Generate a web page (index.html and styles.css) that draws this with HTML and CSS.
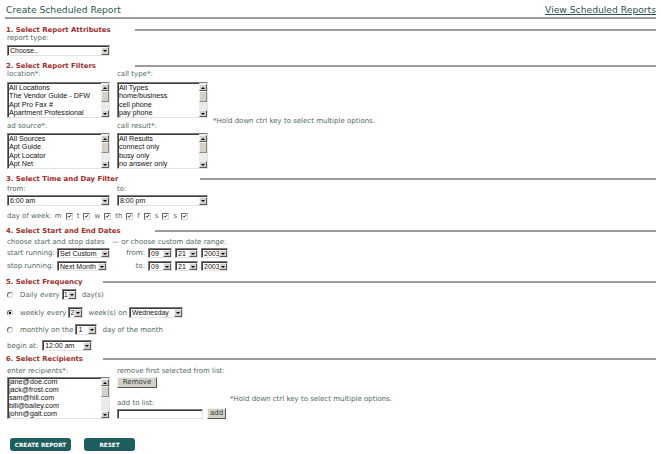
FILE: index.html
```html
<!DOCTYPE html>
<html>
<head>
	<meta charset="utf-8">
	<meta name="viewport" content="width=device-width, initial-scale=1.0">
	<title>Create Scheduled Report</title>
	<link rel="stylesheet" href="styles.css">
</head>
<body>
<div class="page">
	<div class="top">
		<span class="page-title">Create Scheduled Report</span>
		<a class="top-link" href="#">View Scheduled Reports</a>
	</div>
	<div class="rule"></div>

	<!-- 1. attributes -->
	<div class="section-head first"><span class="section-title s1">1. Select Report Attributes</span><span class="section-line"></span></div>
	<div class="block">
		<div class="label">report type:</div>
		<span class="dd w-103 mt2"><span class="dd-val">Choose..</span><span class="dd-btn"></span></span>
	</div>

	<!-- 2. filters -->
	<div class="section-head"><span class="section-title s2">2. Select Report Filters</span><span class="section-line"></span></div>
	<div class="cols">
		<div class="col-a">
			<div class="label">location*:</div>
			<div class="listbox h4 mt3">
				<div class="list-items">
					<div>All Locations</div>
					<div>The Vendor Guide - DFW</div>
					<div>Apt Pro Fax #</div>
					<div>Apartment Professional</div>
				</div>
				<div class="scroll"><span class="sb-btn up"></span><span class="sb-thumb"></span><span class="sb-track"></span><span class="sb-btn down"></span></div>
			</div>
			<div class="label mt4">ad source*:</div>
			<div class="listbox h4 mt2">
				<div class="list-items">
					<div>All Sources</div>
					<div>Apt Guide</div>
					<div>Apt Locator</div>
					<div>Apt Net</div>
				</div>
				<div class="scroll"><span class="sb-btn up"></span><span class="sb-thumb"></span><span class="sb-track"></span><span class="sb-btn down"></span></div>
			</div>
		</div>
		<div class="col-b">
			<div class="label">call type*:</div>
			<div class="listbox h4 mt3">
				<div class="list-items">
					<div>All Types</div>
					<div>home/business</div>
					<div>cell phone</div>
					<div>pay phone</div>
				</div>
				<div class="scroll"><span class="sb-btn up"></span><span class="sb-thumb"></span><span class="sb-track"></span><span class="sb-btn down"></span></div>
			</div>
			<div class="label mt4">call result*:</div>
			<div class="listbox h4 mt2">
				<div class="list-items">
					<div>All Results</div>
					<div>connect only</div>
					<div>busy only</div>
					<div>no answer only</div>
				</div>
				<div class="scroll"><span class="sb-btn up"></span><span class="sb-thumb"></span><span class="sb-track"></span><span class="sb-btn down"></span></div>
			</div>
		</div>
		<div class="hint hint-filters">*Hold down ctrl key to select multiple options.</div>
	</div>

	<!-- 3. time and day -->
	<div class="section-head"><span class="section-title s3">3. Select Time and Day Filter</span><span class="section-line"></span></div>
	<div class="cols mt2">
		<div class="col-a">
			<div class="label">from:</div>
			<span class="dd w-103 mt1"><span class="dd-val">6:00 am</span><span class="dd-btn"></span></span>
		</div>
		<div class="col-b">
			<div class="label">to:</div>
			<span class="dd w-91 mt1"><span class="dd-val">8:00 pm</span><span class="dd-btn"></span></span>
		</div>
	</div>
	<div class="days">
		<span>day of week:</span>
		<span class="day">m</span><span class="check"><svg viewBox="0 0 7 7"><path d="M1.4 3.2 L2.8 4.7 L5.6 1.6" fill="none" stroke="#000" stroke-width="1.3"/></svg></span>
		<span class="day">t</span><span class="check"><svg viewBox="0 0 7 7"><path d="M1.4 3.2 L2.8 4.7 L5.6 1.6" fill="none" stroke="#000" stroke-width="1.3"/></svg></span>
		<span class="day">w</span><span class="check"><svg viewBox="0 0 7 7"><path d="M1.4 3.2 L2.8 4.7 L5.6 1.6" fill="none" stroke="#000" stroke-width="1.3"/></svg></span>
		<span class="day">th</span><span class="check"><svg viewBox="0 0 7 7"><path d="M1.4 3.2 L2.8 4.7 L5.6 1.6" fill="none" stroke="#000" stroke-width="1.3"/></svg></span>
		<span class="day">f</span><span class="check"><svg viewBox="0 0 7 7"><path d="M1.4 3.2 L2.8 4.7 L5.6 1.6" fill="none" stroke="#000" stroke-width="1.3"/></svg></span>
		<span class="day">s</span><span class="check"><svg viewBox="0 0 7 7"><path d="M1.4 3.2 L2.8 4.7 L5.6 1.6" fill="none" stroke="#000" stroke-width="1.3"/></svg></span>
		<span class="day">s</span><span class="check"><svg viewBox="0 0 7 7"><path d="M1.4 3.2 L2.8 4.7 L5.6 1.6" fill="none" stroke="#000" stroke-width="1.3"/></svg></span>
	</div>

	<!-- 4. dates -->
	<div class="section-head"><span class="section-title s4">4. Select Start and End Dates</span><span class="section-line"></span></div>
	<div class="dates">
		<div class="dates-note">choose start and stop dates</div>
		<div class="dates-note-2">&mdash; or choose custom date range:</div>

		<div class="date-label">start running:</div>
		<div><span class="dd w-53"><span class="dd-val">Set Custom</span><span class="dd-btn"></span></span></div>
		<div class="range-label">from:</div>
		<div class="date-picks">
			<span class="dd w-24"><span class="dd-val">09</span><span class="dd-btn"></span></span>
			<span class="dd w-23"><span class="dd-val">21</span><span class="dd-btn"></span></span>
			<span class="dd w-27"><span class="dd-val">2003</span><span class="dd-btn"></span></span>
		</div>

		<div class="date-label row2">stop running:</div>
		<div class="row2"><span class="dd w-50"><span class="dd-val">Next Month</span><span class="dd-btn"></span></span></div>
		<div class="range-label row2">to:</div>
		<div class="date-picks row2">
			<span class="dd w-24"><span class="dd-val">09</span><span class="dd-btn"></span></span>
			<span class="dd w-23"><span class="dd-val">21</span><span class="dd-btn"></span></span>
			<span class="dd w-27"><span class="dd-val">2003</span><span class="dd-btn"></span></span>
		</div>
	</div>

	<!-- 5. frequency -->
	<div class="section-head"><span class="section-title s5">5. Select Frequency</span><span class="section-line"></span></div>
	<div class="freq-row mt3">
		<span class="radio"></span>
		<span>Daily every</span>
		<span class="dd w-15 inline"><span class="dd-val">1</span><span class="dd-btn"></span></span>
		<span>day(s)</span>
	</div>
	<div class="freq-row mt7">
		<span class="radio on"></span>
		<span>weekly every</span>
		<span class="dd w-15 inline"><span class="dd-val">2</span><span class="dd-btn"></span></span>
		<span>week(s) on</span>
		<span class="dd w-54 inline"><span class="dd-val">Wednesday</span><span class="dd-btn"></span></span>
	</div>
	<div class="freq-row mt6">
		<span class="radio"></span>
		<span>monthly on the</span>
		<span class="dd w-22 inline"><span class="dd-val">1</span><span class="dd-btn"></span></span>
		<span>day of the month</span>
	</div>
	<div class="freq-row begin mt5">
		<span>begin at:</span>
		<span class="dd w-50 inline"><span class="dd-val">12:00 am</span><span class="dd-btn"></span></span>
	</div>

	<!-- 6. recipients -->
	<div class="section-head tight"><span class="section-title s6">6. Select Recipients</span><span class="section-line"></span></div>
	<div class="cols mt4">
		<div class="col-a">
			<div class="label">enter recipients*:</div>
			<div class="listbox h5 mt1">
				<div class="list-items">
					<div>jane@doe.com</div>
					<div>jack@frost.com</div>
					<div>sam@hill.com</div>
					<div>bill@bailey.com</div>
					<div>john@galt.com</div>
				</div>
				<div class="scroll"><span class="sb-btn up"></span><span class="sb-thumb"></span><span class="sb-track"></span><span class="sb-btn down"></span></div>
			</div>
		</div>
		<div class="col-mid">
			<div class="label">remove first selected from list:</div>
			<button class="win-btn remove" type="button">Remove</button>
			<div class="label add-label">add to list:</div>
			<div class="add-row">
				<input class="text-in" type="text">
				<button class="win-btn add" type="button">add</button>
			</div>
		</div>
		<div class="hint hint-recip">*Hold down ctrl key to select multiple options.</div>
	</div>

	<div class="actions">
		<button class="btn create" type="button">CREATE REPORT</button>
		<button class="btn reset" type="button">RESET</button>
	</div>
</div>
</body>
</html>
```

FILE: styles.css
```css
body {
	margin: 0;
	background: #fff;
	font-family: "DejaVu Sans", Verdana, sans-serif;
	font-size: 7px;
	color: #50695a;
}
.page {
	padding: 2px 5px 0 5px;
}
.top {
	display: flex;
	justify-content: space-between;
	align-items: center;
	height: 14px;
}
.page-title {
	font-size: 9.2px;
	color: #2d5353;
	padding-left: 1px;
}
.top-link {
	font-size: 9.2px;
	color: #2d5353;
	text-decoration: underline;
}
.rule {
	height: 2px;
	margin-top: 1px;
	background: #9a9a9a;
}

/* section headers */
.section-head {
	display: flex;
	align-items: center;
	height: 9px;
	margin-top: 5px;
	padding-left: 1px;
}
.section-head.first { margin-top: 6px; }
.section-head.tight { margin-top: 3px; }
.section-title {
	flex: none;
	font-weight: bold;
	font-size: 6.9px;
	color: #a02c2c;
	white-space: nowrap;
}
.s1, .s2 { width: 129px; }
.s3 { width: 194px; }
.s4 { width: 149px; }
.s5, .s6 { width: 97px; }
.section-line {
	flex: 1;
	height: 2px;
	background: #9a9a9a;
}

.block, .cols, .days, .dates, .freq-row, .actions {
	padding-left: 2px;
}
.label {
	height: 9px;
	line-height: 9px;
	white-space: nowrap;
}
.mt1 { margin-top: 1px; }
.mt2 { margin-top: 2px; }
.mt3 { margin-top: 3px; }
.mt4 { margin-top: 4px; }
.mt5 { margin-top: 5px; }
.mt6 { margin-top: 6px; }
.mt7 { margin-top: 7px; }

/* windows style dropdown */
.dd {
	display: inline-flex;
	box-sizing: border-box;
	height: 11px;
	border: 1px solid;
	border-color: #7c7c7c #e2e2e2 #e2e2e2 #7c7c7c;
	box-shadow: inset 1px 1px 0 #3c3c3c;
	background: #fff;
	font-family: "Liberation Sans", Arial, sans-serif;
	font-size: 7px;
	color: #111;
	vertical-align: middle;
}
.block .dd, .cols .dd { display: flex; }
.dd-val {
	flex: 1;
	min-width: 0;
	padding: 0 0 0 2px;
	line-height: 9px;
	white-space: nowrap;
	overflow: hidden;
}
.w-15 .dd-val { padding-left: 1px; }
.dd-btn {
	flex: none;
	display: flex;
	align-items: center;
	justify-content: center;
	box-sizing: border-box;
	width: 8px;
	margin: 1px 0 0 0;
	background: #d4d0c8;
	border: 1px solid;
	border-color: #f2f2f2 #5a5a5a #5a5a5a #f2f2f2;
}
.dd-btn::after {
	content: "";
	border-left: 2px solid transparent;
	border-right: 2px solid transparent;
	border-top: 2px solid #000;
}
.w-103 { width: 103px; }
.w-91 { width: 91px; }
.w-54 { width: 54px; }
.w-53 { width: 53px; }
.w-50 { width: 50px; }
.w-27 { width: 27px; }
.w-24 { width: 24px; }
.w-23 { width: 23px; }
.w-22 { width: 22px; }
.w-15 { width: 15px; }

/* listboxes */
.cols {
	display: flex;
}
.col-a {
	width: 103px;
	margin-right: 7px;
}
.col-b {
	width: 91px;
	margin-right: 5px;
}
.listbox {
	display: flex;
	box-sizing: border-box;
	border: 1px solid;
	border-color: #7c7c7c #e2e2e2 #e2e2e2 #7c7c7c;
	box-shadow: inset 1px 1px 0 #3c3c3c;
	background: #fff;
	font-family: "Liberation Sans", Arial, sans-serif;
	font-size: 7.2px;
	color: #111;
}
.listbox.h4 { height: 36px; }
.listbox.h5 { height: 42px; }
.list-items {
	flex: 1;
	min-width: 0;
	padding: 1px 0 0 1px;
	line-height: 8.3px;
	white-space: nowrap;
	overflow: hidden;
}
.h5 .list-items {
	padding-top: 0;
	line-height: 8px;
}
.scroll {
	flex: none;
	display: flex;
	flex-direction: column;
	width: 8px;
	padding: 1px 0 0 0;
	background: #ebebeb;
}
.sb-btn {
	flex: none;
	display: flex;
	align-items: center;
	justify-content: center;
	box-sizing: border-box;
	height: 7px;
	background: #d4d0c8;
	border: 1px solid;
	border-color: #f2f2f2 #5a5a5a #5a5a5a #f2f2f2;
}
.sb-btn.up::after {
	content: "";
	border-left: 2px solid transparent;
	border-right: 2px solid transparent;
	border-bottom: 2px solid #000;
}
.sb-btn.down::after {
	content: "";
	border-left: 2px solid transparent;
	border-right: 2px solid transparent;
	border-top: 2px solid #000;
}
.sb-thumb {
	flex: none;
	box-sizing: border-box;
	height: 11px;
	background: #d4d0c8;
	border: 1px solid;
	border-color: #f2f2f2 #8a8a8a #8a8a8a #f2f2f2;
}
.sb-track {
	flex: 1;
}
.hint {
	display: flex;
	align-items: center;
	white-space: nowrap;
}
.hint-filters {
	padding-top: 3px;
}

/* day of week */
.days {
	display: flex;
	align-items: center;
	height: 10px;
	margin-top: 5px;
}
.day {
	margin-left: 4px;
}
.days .day:nth-child(2) { margin-left: 3px; }
.check {
	display: inline-flex;
	box-sizing: border-box;
	width: 7px;
	height: 7px;
	margin-left: 4px;
	background: #fff;
	border: 1px solid;
	border-color: #6a6a6a #d8d8d8 #d8d8d8 #6a6a6a;
}
.check svg {
	width: 5px;
	height: 5px;
}

/* dates */
.dates {
	display: grid;
	grid-template-columns: 50px 55px 36px auto;
	grid-template-rows: 9px 11px 14px;
	margin-top: 3px;
}
.dates-note {
	grid-column: 1 / 3;
	white-space: nowrap;
	line-height: 9px;
}
.dates-note-2 {
	grid-column: 3 / 5;
	white-space: nowrap;
	line-height: 9px;
}
.dates .dd { height: 10px; }
.date-label {
	white-space: nowrap;
	line-height: 10px;
}
.range-label {
	text-align: right;
	padding-right: 3px;
	line-height: 10px;
}
.date-picks {
	display: flex;
	gap: 3px;
}
.dates > :nth-child(n+3) { margin-top: 1px; }
.dates > .row2 { margin-top: 3px; }

/* frequency */
.freq-row {
	display: flex;
	align-items: center;
	height: 11px;
	white-space: nowrap;
}
.radio {
	flex: none;
	box-sizing: border-box;
	width: 6px;
	height: 6px;
	margin-right: 7px;
	border-radius: 50%;
	background: #fff;
	border: 1px solid;
	border-color: #6a6a6a #d8d8d8 #d8d8d8 #6a6a6a;
}
.radio.on {
	background: radial-gradient(circle, #000 0 1.2px, #fff 1.6px);
}
.freq-row .dd.inline {
	margin: 0 5px 0 2px;
}
.freq-row.begin .dd.inline {
	margin-left: 4px;
}

/* recipients */
.col-mid {
	width: 113px;
}
.win-btn {
	box-sizing: border-box;
	height: 11px;
	padding: 0;
	background: #d4d0c8;
	border: 1px solid;
	border-color: #f4f4f4 #555 #555 #f4f4f4;
	font-family: "DejaVu Sans", Verdana, sans-serif;
	font-size: 7px;
	color: #2f3f36;
	line-height: 9px;
}
.remove {
	display: block;
	width: 40px;
	margin-top: 1px;
}
.add-label {
	margin-top: 11px;
}
.add-row {
	display: flex;
	align-items: flex-start;
}
.text-in {
	box-sizing: border-box;
	width: 86px;
	height: 10px;
	margin: 1px 0 0 0;
	padding: 0;
	background: #fff;
	border: 1px solid;
	border-color: #7c7c7c #e2e2e2 #e2e2e2 #7c7c7c;
	box-shadow: inset 1px 1px 0 #3c3c3c;
}
.add {
	width: 19px;
	margin-left: 4px;
}
.hint-recip {
	padding-top: 11px;
}

/* bottom buttons */
.actions {
	display: flex;
	gap: 13px;
	margin-top: 19px;
	padding-left: 5px;
}
.btn {
	height: 13px;
	padding: 0;
	border: none;
	border-radius: 3px;
	background: #1e5e5e;
	color: #fff;
	font-family: "DejaVu Sans", Verdana, sans-serif;
	font-weight: bold;
	font-size: 5.7px;
	cursor: pointer;
}
.create { width: 61px; }
.reset { width: 51px; }
```
